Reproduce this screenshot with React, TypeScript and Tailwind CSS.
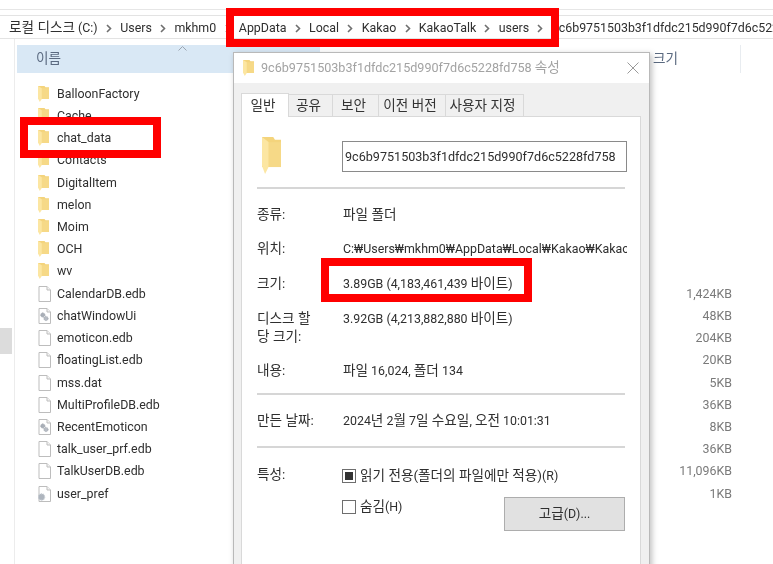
import React from "react";

const rows = [
  { name: "BalloonFactory", kind: "folder" },
  { name: "Cache", kind: "folder" },
  { name: "chat_data", kind: "folder" },
  { name: "Contacts", kind: "folder" },
  { name: "DigitalItem", kind: "folder" },
  { name: "melon", kind: "folder" },
  { name: "Moim", kind: "folder" },
  { name: "OCH", kind: "folder" },
  { name: "wv", kind: "folder" },
  { name: "CalendarDB.edb", kind: "file", size: "1,424KB" },
  { name: "chatWindowUi", kind: "gear", size: "48KB" },
  { name: "emoticon.edb", kind: "file", size: "204KB" },
  { name: "floatingList.edb", kind: "file", size: "20KB" },
  { name: "mss.dat", kind: "file", size: "5KB" },
  { name: "MultiProfileDB.edb", kind: "file", size: "36KB" },
  { name: "RecentEmoticon", kind: "gear", size: "8KB" },
  { name: "talk_user_prf.edb", kind: "file", size: "36KB" },
  { name: "TalkUserDB.edb", kind: "file", size: "11,096KB" },
  { name: "user_pref", kind: "config", size: "1KB" },
];

const crumbs = ["Users", "mkhm0", "AppData", "Local", "Kakao", "KakaoTalk", "users"];
const tabs = [
  { label: "일반", width: "w-[48px]" },
  { label: "공유", width: "w-[44px]" },
  { label: "보안", width: "w-[46px]" },
  { label: "이전 버전", width: "w-[67px]" },
  { label: "사용자 지정", width: "w-[78px]" },
];

// hangul runs slightly wider than the latin text beside them
const K = ({ children }: { children: React.ReactNode }) => <span className="text-[13.6px] leading-none">{children}</span>;

const Chevron = () => (
  <svg width="6" height="9" viewBox="0 0 6 9" className="shrink-0 mx-[8.3px]">
    <path d="M1 1l3.5 3.5L1 8" fill="none" stroke="#6f6f6f" strokeWidth="1.6" />
  </svg>
);

const FolderIcon = ({ big }: { big?: boolean }) => (
  <svg width={big ? 19 : 11} height={big ? 37 : 16} viewBox="0 0 11 16" preserveAspectRatio="none" className="shrink-0">
    <path d="M0 0h6.500l1 1.200h3.500v11.800h-11z" fill="#f4d47c" />
    <path d="M3.800 2.200h7.200v10.800h-7.200z" fill="#f6d987" />
    <path d="M0 0l3.800 2.200v10.800l-2 3-1.800-3.500z" fill="#fce6a2" />
  </svg>
);

const FileIcon = ({ kind }: { kind: string }) => (
  <svg width="13" height="16" viewBox="0 0 13 16" className="shrink-0">
    <path d="M1 .5h8l3.500 3.500v11.500h-11.500z" fill="#fff" stroke="#bdbdbd" />
    <path d="M9 .5v3.500h3.500" fill="#f4f4f4" stroke="#bdbdbd" />
    {kind === "gear" && (
      <>
        <circle cx="4.800" cy="7" r="2.100" fill="#a9afb8" stroke="#8f96a0" strokeWidth=".8" strokeDasharray="1 .6" />
        <circle cx="8" cy="10.500" r="2.100" fill="#b7bcc4" stroke="#979da6" strokeWidth=".8" strokeDasharray="1 .6" />
      </>
    )}
    {kind === "config" && (
      <circle cx="3.500" cy="11" r="3.200" fill="#aeb5be" stroke="#c9ced4" strokeWidth="1.200" strokeDasharray="1.200 .8" />
    )}
  </svg>
);

const PropRow = ({ label, children, className }: { label: React.ReactNode; children: React.ReactNode; className?: string }) => (
  <div className={`flex items-start ${className ?? ""}`}>
    <div className="w-[86px] shrink-0">{label}</div>
    <div className="whitespace-nowrap">{children}</div>
  </div>
);

const Divider = ({ className }: { className?: string }) => (
  <div className={`h-[2px] w-[368px] bg-[#d6d6d6] ${className ?? ""}`} />
);

export default function App() {
  return (
    <div
      className="relative w-[773px] h-[564px] overflow-hidden bg-white text-[12.4px] leading-[20px] text-[#2f2f2f] blur-[0.3px]"
      style={{ fontFamily: 'Roboto, "Noto Sans CJK KR", sans-serif' }}
    >
      <div className="h-[10px] border-b border-[#e6e6e6]" />

      {/* address bar */}
      <div className="mt-[5px] h-[24px] border-y border-[#e3e3e3] flex items-center whitespace-nowrap pl-[9px] pt-[2px]">
        <span>
          <span className="text-[13.6px] leading-none">로컬 디스크</span> (C:)
        </span>
        <Chevron />
        {crumbs.map((c) => (
          <React.Fragment key={c}>
            <span>{c}</span>
            <Chevron />
          </React.Fragment>
        ))}
        <span>9c6b9751503b3f1dfdc215d990f7d6c5228fd758</span>
      </div>

      <div className="flex h-[525px]">
        {/* left nav gutter */}
        <div className="w-[15px] shrink-0 border-r border-[#ececec] pt-[289px]">
          <div className="h-[26px] w-[12px] bg-[#dcdcdc]" />
        </div>

        <div className="flex-1 min-w-0">
          {/* column header */}
          <div className="mt-[6px] h-[28px] flex text-[#5b6a80]">
            <div className="w-[303px] ml-[2px] bg-[#d9e8f5] flex items-center pl-[19px] relative">
              <K>이름</K>
              <svg width="9" height="5" viewBox="0 0 9 5" className="absolute left-[161px] top-[1px]">
                <path d="M.5 4.500l4-4 4 4" fill="none" stroke="#9aa5b1" />
              </svg>
            </div>
            <div className="w-[333px] pl-[333px] flex items-center whitespace-nowrap">
              <K>크기</K>
            </div>
            <div className="w-[1px] bg-[#e8ecf0] ml-[87px]" />
          </div>

          {/* file list */}
          <div className="mt-[9.6px]">
            {rows.map((r) => (
              <div key={r.name} className="h-[22.22px] flex items-center pl-[23px] whitespace-nowrap">
                <span className="w-[19px] flex shrink-0">
                  {r.kind === "folder" ? <FolderIcon /> : <FileIcon kind={r.kind} />}
                </span>
                <span className="w-[615px]">{r.name}</span>
                {r.size && <span className="w-[60px] text-right text-[#7a7a7a]">{r.size}</span>}
              </div>
            ))}
          </div>
        </div>
      </div>

      {/* properties dialog */}
      <div className="absolute left-[233px] top-[52px] w-[417px] h-[520px] bg-[#f0f0f0] border border-[#b9b9b9] shadow-[2px_2px_6px_rgba(0,0,0,0.25)]">
        <div className="h-[30px] bg-white flex items-center pl-[9px] pr-[10px] text-[#a3a3a3]">
          <FolderIcon />
          <span className="ml-[7px] flex-1 whitespace-nowrap text-[12.6px]">
            9c6b9751503b3f1dfdc215d990f7d6c5228fd758 <K>속성</K>
          </span>
          <svg width="12" height="12" viewBox="0 0 12 12">
            <path d="M.5.5l11 11M11.500.5l-11 11" stroke="#9a9a9a" />
          </svg>
        </div>

        <div className="pl-[7px] pr-[8px] pt-[10px]">
          <div className="flex items-end h-[23px] text-[#333]">
            {tabs.map((t, i) => (
              <div
                key={t.label}
                className={
                  i === 0
                    ? `${t.width} h-[24px] pr-[4px] bg-white border border-b-0 border-[#d9d9d9] flex items-center justify-center relative z-10 -mb-px`
                    : `${t.width} h-[22px] pr-[4px] border border-l-0 border-b-0 border-[#d9d9d9] flex items-center justify-center`
                }
              >
                <K>{t.label}</K>
              </div>
            ))}
          </div>

          <div className="bg-white border border-[#d9d9d9] h-[470px] pl-[15px] pt-[24px]">
            <div className="flex items-start">
              <div className="w-[85px] pl-[5px] shrink-0 -mt-[4px] h-[35px]">
                <FolderIcon big />
              </div>
              <div className="w-[285px] h-[31px] border border-[#8a8a8a] flex items-center pl-[2px] whitespace-nowrap text-[12.6px]">
                9c6b9751503b3f1dfdc215d990f7d6c5228fd758
              </div>
            </div>

            <Divider className="mt-[15px]" />

            <PropRow label={<K>종류:</K>} className="mt-[16px]">
              <K>파일 폴더</K>
            </PropRow>
            <PropRow label={<K>위치:</K>} className="mt-[14px]">
              <span className="block w-[284px] overflow-hidden">C:₩Users₩mkhm0₩AppData₩Local₩Kakao₩KakaoTalk₩users</span>
            </PropRow>
            <PropRow label={<K>크기:</K>} className="mt-[15px]">
              3.89GB (4,183,461,439 <K>바이트</K>)
            </PropRow>
            <PropRow
              label={
                <K>
                  디스크 할<br />당 크기:
                </K>
              }
              className="mt-[16px] leading-[18px]"
            >
              3.92GB (4,213,882,880 <K>바이트</K>)
            </PropRow>
            <PropRow label={<K>내용:</K>} className="mt-[15px]">
              <K>파일</K> 16,024, <K>폴더</K> 134
            </PropRow>

            <Divider className="mt-[12px]" />

            <PropRow label={<K>만든 날짜:</K>} className="mt-[16px]">
              2024<K>년</K> 2<K>월</K> 7<K>일 수요일</K>, <K>오전</K> 10:01:31
            </PropRow>

            <Divider className="mt-[15px]" />

            <div className="mt-[17px] flex items-start">
              <div className="w-[85px] shrink-0">
                <K>특성:</K>
              </div>
              <div className="w-[283px]">
                <div className="flex items-center gap-[4px] mt-[1px]">
                  <span className="w-[14px] h-[14px] border border-[#6e6e6e] flex items-center justify-center">
                    <span className="w-[8px] h-[8px] bg-[#333]" />
                  </span>
                  <span className="whitespace-nowrap">
                    <K>읽기 전용(폴더의 파일에만 적용)</K>(R)
                  </span>
                </div>
                <div className="flex items-start justify-between mt-[11px]">
                  <div className="flex items-center gap-[4px]">
                    <span className="w-[14px] h-[14px] border border-[#6e6e6e]" />
                    <span>
                      <K>숨김</K>(H)
                    </span>
                  </div>
                  <div className="w-[121px] h-[34px] bg-[#e1e1e1] border border-[#adadad] flex items-center justify-center">
                    <span>
                      <K>고급</K>(D)...
                    </span>
                  </div>
                </div>
              </div>
            </div>
          </div>
        </div>
      </div>

      {/* red annotation boxes */}
      <div className="absolute left-[226px] top-[8px] w-[333px] h-[39px] border-[8px] border-[#ff0000]" />
      <div className="absolute left-[20px] top-[117px] w-[141px] h-[41px] border-[8px] border-[#ff0000]" />
      <div className="absolute left-[321px] top-[258px] w-[211px] h-[44px] border-[8px] border-[#ff0000]" />
    </div>
  );
}
